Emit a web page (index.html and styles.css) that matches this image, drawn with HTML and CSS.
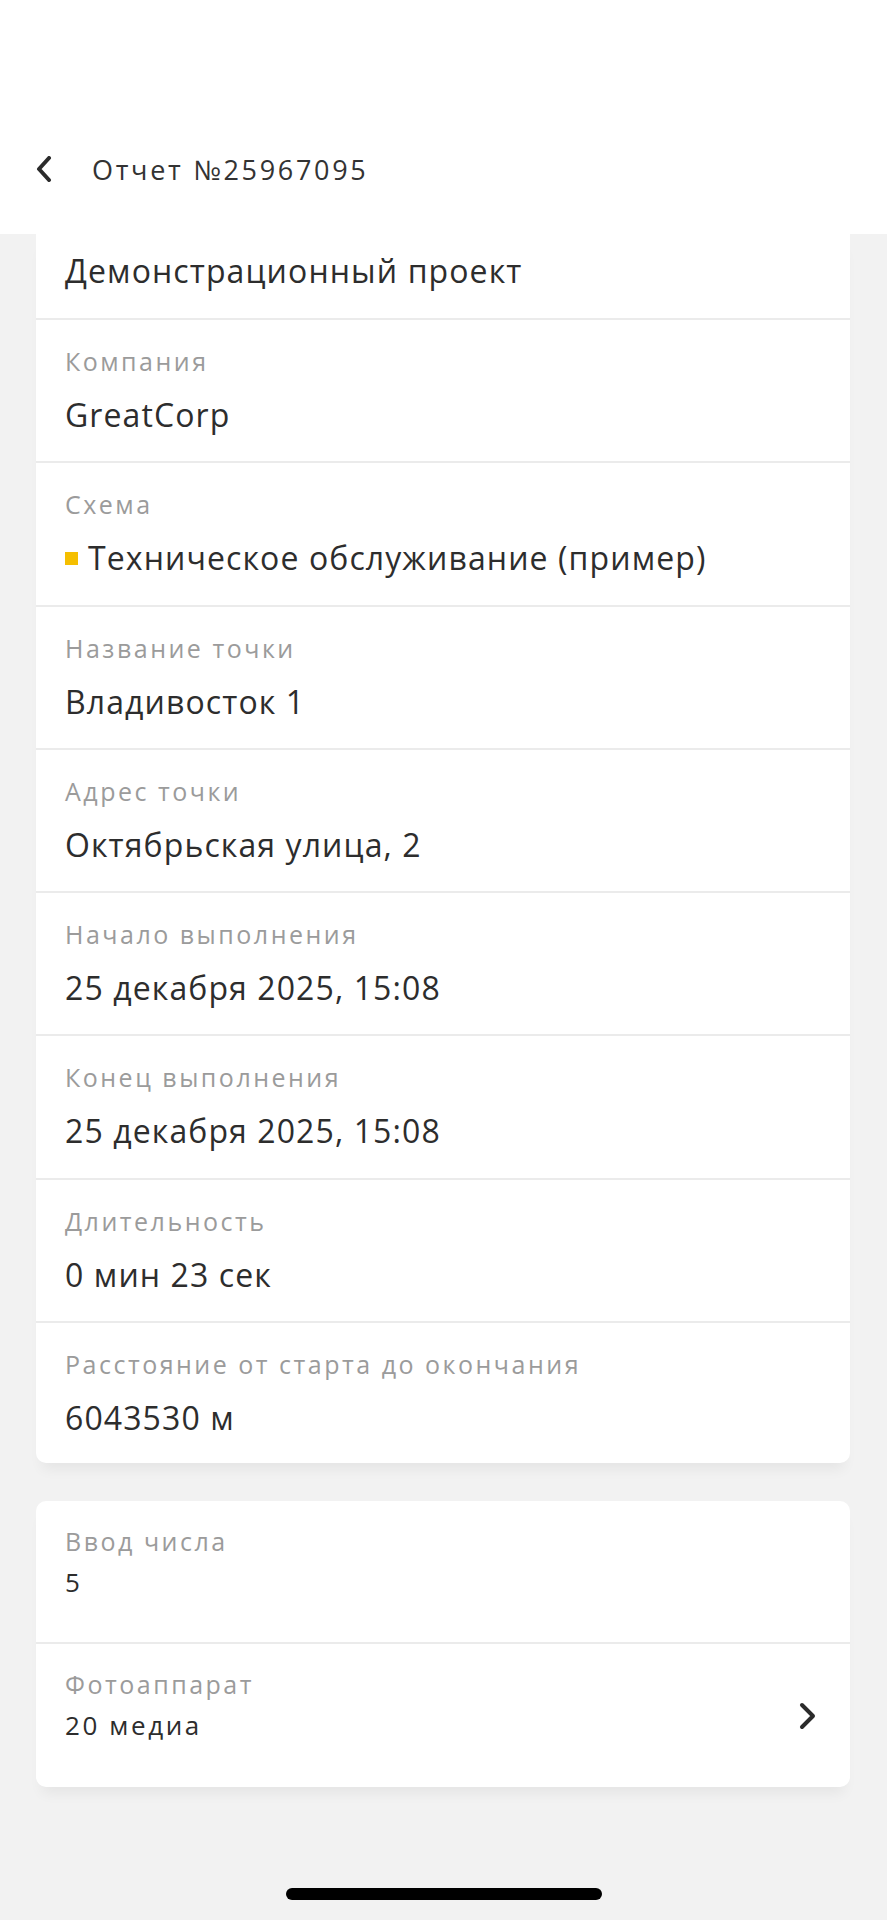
FILE: index.html
```html
<!DOCTYPE html>
<html lang="ru">
<head>
  <meta charset="UTF-8">
  <meta name="viewport" content="width=device-width, initial-scale=1.0">
  <title>Отчет №25967095</title>

  <link rel="stylesheet" href="styles.css">
</head>
<body>
  <header class="topbar">
    <div class="topbar-inner">
      <button class="back" type="button" aria-label="Назад">
        <svg width="16" height="26" viewBox="0 0 16 26">
          <path d="M13 2 L3 13 L13 24" fill="none" stroke="#2b2b2b" stroke-width="4" stroke-linecap="round" stroke-linejoin="round"/>
        </svg>
      </button>
      <h1 class="title">Отчет №25967095</h1>
    </div>
  </header>

  <main class="content">
    <section class="card card-info">
      <div class="row row-first">
        <div class="value">Демонстрационный проект</div>
      </div>
      <div class="row">
        <div class="label">Компания</div>
        <div class="value">GreatCorp</div>
      </div>
      <div class="row">
        <div class="label">Схема</div>
        <div class="value"><span class="marker"></span>Техническое обслуживание (пример)</div>
      </div>
      <div class="row">
        <div class="label">Название точки</div>
        <div class="value">Владивосток 1</div>
      </div>
      <div class="row">
        <div class="label">Адрес точки</div>
        <div class="value">Октябрьская улица, 2</div>
      </div>
      <div class="row">
        <div class="label">Начало выполнения</div>
        <div class="value">25 декабря 2025, 15:08</div>
      </div>
      <div class="row">
        <div class="label">Конец выполнения</div>
        <div class="value">25 декабря 2025, 15:08</div>
      </div>
      <div class="row">
        <div class="label">Длительность</div>
        <div class="value">0 мин 23 сек</div>
      </div>
      <div class="row">
        <div class="label">Расстояние от старта до окончания</div>
        <div class="value">6043530 м</div>
      </div>
    </section>

    <!-- Answers -->
    <section class="card card-answers">
      <div class="row row-answer">
        <div>
          <div class="label">Ввод числа</div>
          <div class="value">5</div>
        </div>
      </div>
      <div class="row row-answer row-link">
        <div>
          <div class="label">Фотоаппарат</div>
          <div class="value">20 медиа</div>
        </div>
        <svg class="chevron" width="18" height="28" viewBox="0 0 18 28">
          <path d="M3 3 L14 14 L3 25" fill="none" stroke="#2b2b2b" stroke-width="4" stroke-linecap="round" stroke-linejoin="round"/>
        </svg>
      </div>
    </section>
  </main>

  <div class="home-indicator"></div>
</body>
</html>
```

FILE: styles.css
```css
body {
  margin: 0;
  min-height: 1920px;
  background: #f2f2f2;
  font-family: "Open Sans", Lato, sans-serif;
  color: #2d2d2d;
}

.topbar {
  height: 234px;
  box-sizing: border-box;
  padding-top: 139px;
  background: #fff;
  position: relative;
  z-index: 1;
}

.topbar-inner {
  display: flex;
  align-items: center;
  height: 60px;
  padding-left: 36px;
  gap: 40px;
}

.back {
  display: flex;
  padding: 0;
  border: 0;
  background: none;
}

.title {
  margin: 0;
  font-size: 27px;
  font-weight: 400;
  letter-spacing: 2.7px;
  color: #333;
}

.content {
  padding: 0 37px 0 36px;
}

.card {
  background: #fff;
  border-radius: 10px;
  box-shadow: 0 12px 14px -6px rgba(0, 0, 0, 0.06);

  & .row {
    padding: 26px 29px 26px;
    border-bottom: 2px solid #ebebeb;
  }

  & .row:last-child {
    border-bottom: 0;
  }

  & .label {
    font-size: 25px;
    line-height: 30px;
    letter-spacing: 2.5px;
    color: #9b9b9b;
  }

  & .value {
    font-size: 32px;
    line-height: 40px;
    letter-spacing: 1.1px;
    display: flex;
    align-items: center;
  }
}

.card-info {
  border-radius: 0 0 10px 10px;

  & .row {
    height: 143.3px;
    box-sizing: border-box;
  }

  & .label + .value {
    margin-top: 19px;
  }

  & .row-first {
    height: 86px;
    padding-top: 17px;
  }

  & .row:last-child {
    height: 140px;
  }
}

.marker {
  width: 13px;
  height: 13px;
  background: #f5bf00;
  margin-right: 10px;
  flex-shrink: 0;
}

.card-answers {
  margin-top: 38px;

  & .row-answer {
    height: 143px;
    box-sizing: border-box;
    padding-top: 25px;
    display: flex;
    align-items: center;
    justify-content: space-between;
  }

  & .row-answer > div {
    align-self: flex-start;
  }

  & .value {
    font-size: 26px;
    line-height: 30px;
    letter-spacing: 2.6px;
    margin-top: 11px;
  }

  & .row-link {
    padding-right: 33px;
  }

  & .chevron {
    margin-top: 2px;
  }
}

.home-indicator {
  width: 316px;
  height: 12px;
  margin: 101px auto 0;
  border-radius: 6px;
  background: #000;
}
```
